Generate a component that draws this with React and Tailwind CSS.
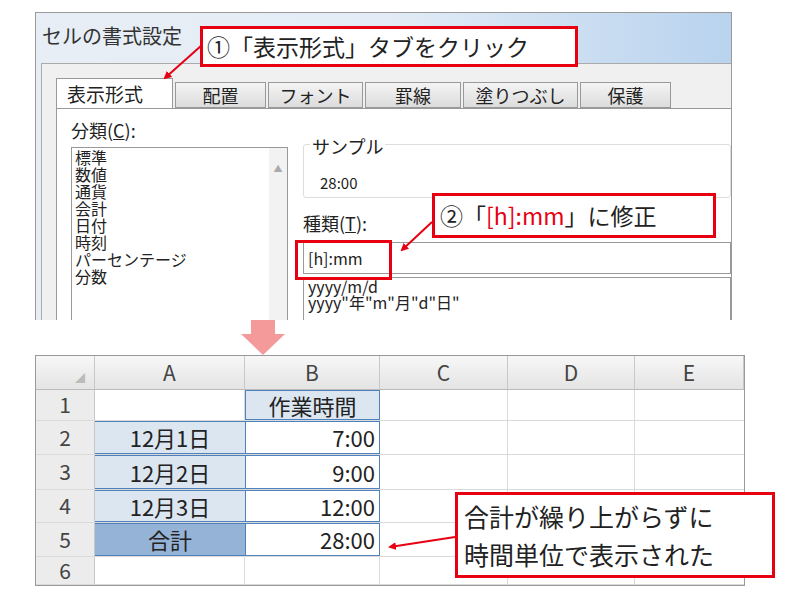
const F = { fontFamily: '"Noto Sans CJK JP", "Liberation Sans", sans-serif' };

function Dialog() {
  const tabs = [["配置", 91], ["フォント", 95], ["罫線", 96], ["塗りつぶし", 115], ["保護", 91]];
  return (
    <div className="ml-[35px] mt-[12px] w-[697px] h-[308px] border border-[#9a9a9a] border-b-0 bg-gradient-to-r from-[#e8eef5] via-[#e3ecf6] to-[#b9d3ee] flex flex-col overflow-hidden">
      <div className="h-[50px] pl-[6px] pt-[8px] text-[20px] text-[#333]">セルの書式設定</div>
      <div className="flex-1 ml-[5px] bg-[#f0f0f0] border-l border-t border-[#aaa] pl-[14px] pt-[14px] flex flex-col">
        <div className="flex items-end h-[30px]">
          <div className="w-[117px] h-[30px] bg-white border border-b-0 border-[#999] text-[19px] text-[#222] pl-[10px] leading-[30px]">表示形式</div>
          {tabs.map(([t, w]) => (
            <div key={t} style={{ width: w }} className="h-[26px] mt-[4px] ml-[2px] bg-gradient-to-b from-[#f4f4f4] to-[#dcdcdc] border border-[#999] text-[18px] text-[#222] flex items-center justify-center">{t}</div>
          ))}
        </div>
        <div className="flex-1 bg-white border-l border-t border-[#999] pl-[14px] flex flex-col">
          <div className="text-[18px] mt-[10px] leading-[22px] text-[#222]">分類(<u>C</u>):</div>
          <div className="flex gap-[15px] mt-[6px] flex-1">
            <div className="w-[217px] border border-[#999] border-b-0 flex overflow-hidden">
              <div className="flex-1 pl-[3px] pt-[1px] text-[16px] leading-[17px] text-[#222]">
                {["標準", "数値", "通貨", "会計", "日付", "時刻", "パーセンテージ", "分数"].map(s => <div key={s} className="h-[17px]">{s}</div>)}
              </div>
              <div className="w-[18px] bg-[#f2f2f2] flex justify-center pt-[14px] text-[9px] text-[#aaa]">▲</div>
            </div>
            <div className="flex-1 flex flex-col">
              <div className="relative h-[54px] mt-[-3px] border border-[#ddd] rounded-[3px]">
                <div className="absolute left-[6px] top-[-10px] bg-white px-[2px] text-[18px] leading-[22px] text-[#222]">サンプル</div>
                <div className="absolute left-[16px] top-[27px] text-[15px] text-[#222]">28:00</div>
              </div>
              <div className="text-[18px] mt-[14px] leading-[22px] text-[#222]">種類(<u>T</u>):</div>
              <div className="h-[32px] mt-[8px] border border-[#999] pl-[4px] text-[16px] leading-[30px] text-[#222]">[h]:mm</div>
              <div className="flex-1 mt-[3px] border border-[#999] border-b-0 pl-[4px] text-[16px] leading-[16px] text-[#222]">
                <div>yyyy/m/d</div>
                <div>yyyy"年"m"月"d"日"</div>
              </div>
            </div>
          </div>
        </div>
      </div>
    </div>
  );
}

function Sheet() {
  const cols = [["", 59], ["A", 150], ["B", 135], ["C", 128], ["D", 127], ["E", 109]];
  const rows = [
    ["1", "", "作業時間", 31],
    ["2", "12月1日", "7:00", 34],
    ["3", "12月2日", "9:00", 35],
    ["4", "12月3日", "12:00", 33],
    ["5", "合計", "28:00", 34],
    ["6", "", "", 28],
  ];
  return (
    <div className="ml-[35px] w-[710px] border border-[#999] bg-white text-[#222]">
      <div className="flex h-[34px] bg-gradient-to-b from-[#f7f7f7] to-[#e4e4e4] border-b border-[#bbb]">
        {cols.map(([c, w], i) => (
          <div key={i} style={{ width: w }} className="border-r border-[#c8c8c8] flex items-center justify-center text-[21px] text-[#444]">
            {i === 0 ? <span className="ml-[30px] mt-[10px] text-[10px] text-[#bbb]">◢</span> : c}
          </div>
        ))}
      </div>
      {rows.map(([n, a, b, h]) => (
        <div key={n} style={{ height: h }} className="flex border-b border-[#dadada]">
          <div className="w-[59px] bg-[#ececec] border-r border-[#c8c8c8] flex items-center justify-center text-[21px] text-[#444]">{n}</div>
          <div className={"w-[150px] flex items-center justify-center text-[22px] " + (n === "5" ? "bg-[#95b3d7] border-y border-[#4f81bd]" : a ? "bg-[#dce6f1] border-y border-[#4f81bd]" : "border-r border-[#dadada]")}>{a}</div>
          <div className={"w-[135px] flex items-center text-[22px] " + (n === "1" ? "justify-center bg-[#dce6f1] border border-[#4f81bd]" : b ? "justify-end pr-[4px] border border-[#4f81bd]" : "border-r border-[#dadada]")}>{b}</div>
          <div className="w-[128px] border-r border-[#dadada]" />
          <div className="w-[127px] border-r border-[#dadada]" />
          <div className="flex-1" />
        </div>
      ))}
    </div>
  );
}

export default function App() {
  return (
    <div style={F} className="relative w-[800px] h-[600px] bg-white overflow-hidden">
      <Dialog />
      <div className="ml-[240px] h-[35px] flex flex-col items-center w-[45px]">
        <div className="w-[24px] h-[14px] bg-[#f59a9a]" />
        <div className="w-0 h-0 border-l-[22px] border-r-[22px] border-t-[21px] border-l-transparent border-r-transparent border-t-[#f59a9a]" />
      </div>
      <Sheet />

      <div className="absolute left-[200px] top-[26px] w-[378px] h-[41px] bg-white border-[3px] border-[#e60012] text-[23px] leading-[34px] pl-[4px] text-[#222] whitespace-nowrap">①「表示形式」タブをクリック</div>
      <div className="absolute left-[432px] top-[193px] w-[284px] h-[45px] bg-white border-[3px] border-[#e60012] text-[23px] leading-[38px] pl-[5px] text-[#222] whitespace-nowrap">②「<span className="text-[#e60012]">[h]:mm</span>」に修正</div>
      <div className="absolute left-[295px] top-[240px] w-[97px] h-[40px] border-[3px] border-[#e60012]" />
      <div className="absolute left-[455px] top-[492px] w-[320px] h-[86px] bg-white border-[3px] border-[#e60012] text-[25px] leading-[38px] pl-[6px] pt-[2px] text-[#222] whitespace-nowrap">合計が繰り上がらずに<br />時間単位で表示された</div>

      <svg className="absolute left-0 top-0" width="800" height="600">
        <defs>
          <marker id="ah" markerWidth="8" markerHeight="8" refX="6" refY="4" orient="auto" markerUnits="userSpaceOnUse">
            <path d="M0,0 L8,4 L0,8 Z" fill="#e60012" />
          </marker>
        </defs>
        <line x1="202" y1="45" x2="165" y2="78" stroke="#e60012" strokeWidth="2" markerEnd="url(#ah)" />
        <line x1="432" y1="222" x2="402" y2="250" stroke="#e60012" strokeWidth="2" markerEnd="url(#ah)" />
        <line x1="455" y1="537" x2="390" y2="547" stroke="#e60012" strokeWidth="2" markerEnd="url(#ah)" />
      </svg>
    </div>
  );
}
